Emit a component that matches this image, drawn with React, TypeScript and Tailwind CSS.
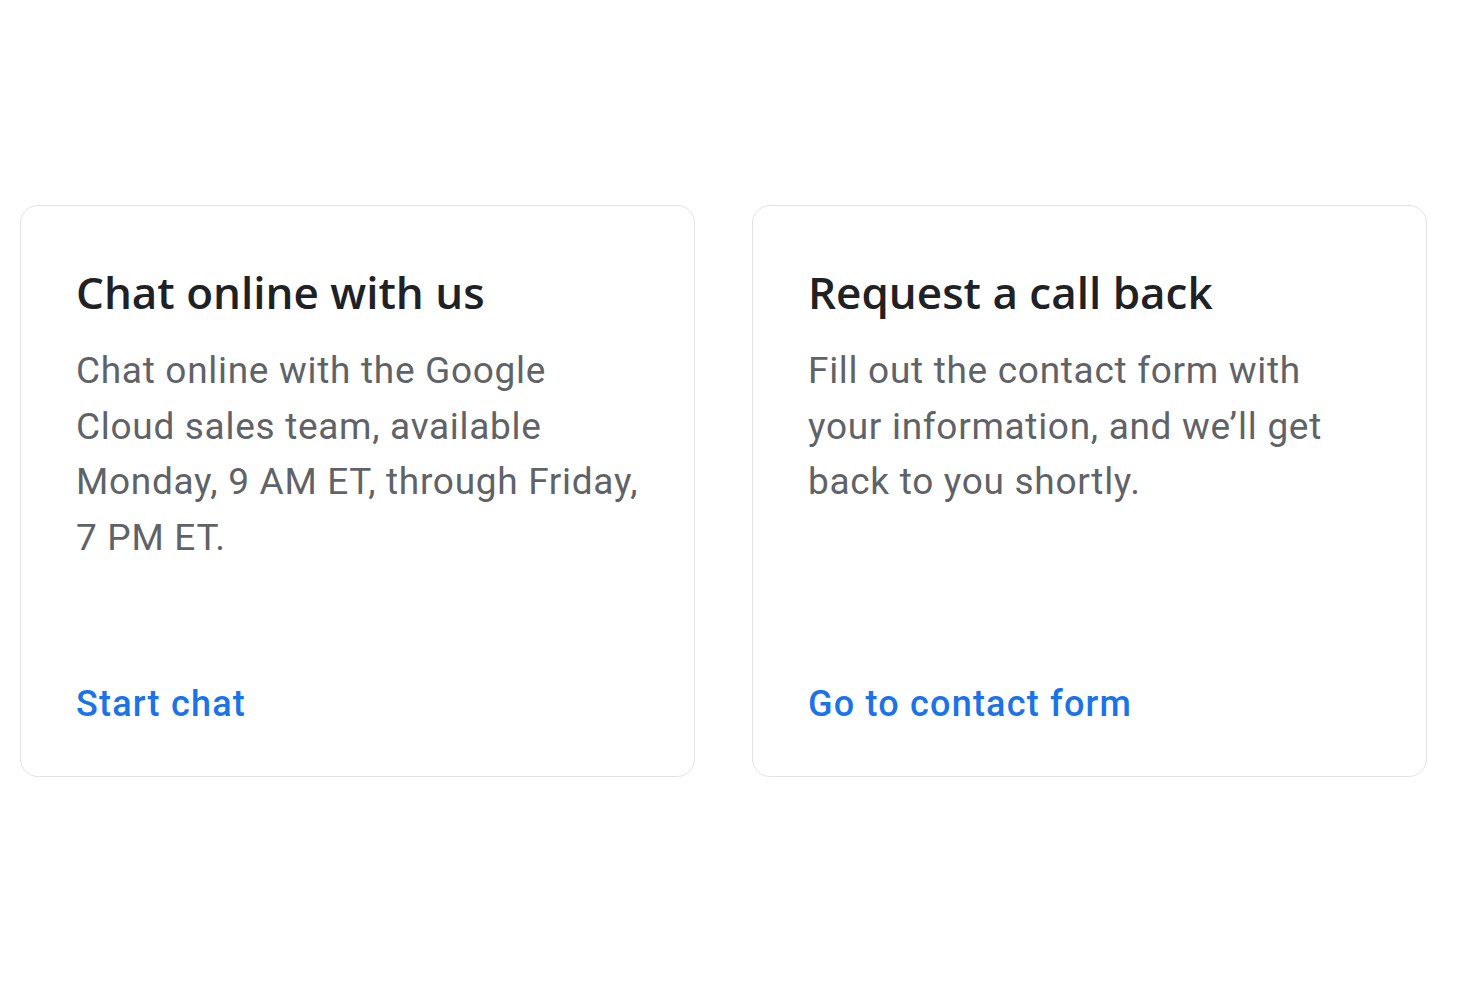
const cards = [
  {
    title: "Chat online with us",
    body: "Chat online with the Google Cloud sales team, available Monday, 9 AM ET, through Friday, 7 PM ET.",
    link: "Start chat",
  },
  {
    title: "Request a call back",
    body: "Fill out the contact form with your information, and we\u2019ll get back to you shortly.",
    link: "Go to contact form",
  },
];

export default function App() {
  return (
    <div className="min-h-screen bg-white flex items-start pt-[205px] pl-[20px]">
      <div className="flex gap-[57px]">
        {cards.map((c) => (
          <div
            key={c.title}
            className="w-[675px] h-[572px] rounded-[18px] border border-[#e3e3e6] bg-white flex flex-col justify-between pl-[55px] pr-[54px] pt-[58px] pb-[50px]"
          >
            <div>
              <h3
                className="text-[44px] leading-[56px] font-semibold text-[#202124]"
                style={{ fontFamily: '"Open Sans", sans-serif' }}
              >
                {c.title}
              </h3>
              <p
                className="mt-[23px] text-[37px] leading-[55.5px] tracking-[0.7px] text-[#5f6368]"
                style={{ fontFamily: 'Roboto, sans-serif' }}
              >
                {c.body}
              </p>
            </div>
            <a
              href="#"
              className="text-[36px] leading-[44px] font-medium tracking-[1.2px] text-[#1a73e8]"
              style={{ fontFamily: 'Roboto, sans-serif' }}
            >
              {c.link}
            </a>
          </div>
        ))}
      </div>
    </div>
  );
}
